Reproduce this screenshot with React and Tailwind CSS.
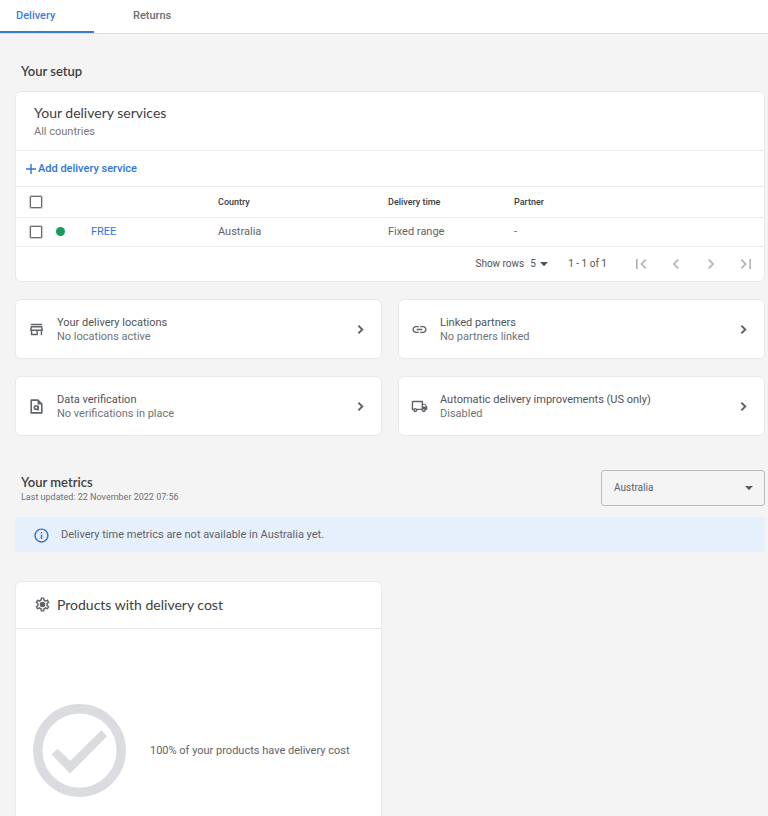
import { useState } from "react";
import {
  MdChevronLeft,
  MdFirstPage,
  MdInfoOutline,
  MdLastPage,
  MdLink,
  MdOutlineLocalShipping,
  MdOutlineSettings,
  MdOutlineStore,
  MdChevronRight,
} from "react-icons/md";

const tabs = ["Delivery", "Returns"];

const services = [
  { id: 1, name: "FREE", country: "Australia", time: "Fixed range", partner: "-" },
];

// page outline with a small lens
const VerifyIcon = ({ className }) => (
  <svg viewBox="0 0 24 24" className={className} fill="none" stroke="currentColor" strokeWidth="2.2" aria-hidden="true">
    <path d="M5 3h9l5.5 5.5V21h-15V3z" strokeLinejoin="round" />
    <path d="M13.5 2.5v6.5h6.5z" fill="currentColor" stroke="none" />
    <circle cx="11.5" cy="13.5" r="2.6" />
    <path d="M14.3 11v6.5" />
  </svg>
);

const GearIcon = ({ className }) => (
  <svg viewBox="0 0 24 24" className={className} aria-hidden="true">
    <MdOutlineSettings size={24} />
    <circle cx="12" cy="12" r="3.4" fill="currentColor" />
  </svg>
);

const PlusIcon = ({ className }) => (
  <svg viewBox="0 0 14 14" className={className} fill="none" stroke="currentColor" strokeWidth="1.4" aria-hidden="true">
    <path d="M7 2v10M2 7h10" />
  </svg>
);

const ChevronIcon = ({ className }) => (
  <svg viewBox="0 0 24 24" className={className} fill="none" stroke="currentColor" strokeWidth="2.8" aria-hidden="true">
    <path d="M9 6.5l5.5 5.5L9 17.5" />
  </svg>
);

const CaretIcon = ({ className }) => (
  <svg viewBox="0 0 16 16" className={className} fill="currentColor" aria-hidden="true">
    <path d="M4 6h8l-4 4.2z" />
  </svg>
);

const links = [
  { title: "Your delivery locations", text: "No locations active", icon: MdOutlineStore },
  { title: "Linked partners", text: "No partners linked", icon: MdLink },
  { title: "Data verification", text: "No verifications in place", icon: VerifyIcon },
  { title: "Automatic delivery improvements (US only)", text: "Disabled", icon: MdOutlineLocalShipping },
];

const App = () => {
  const [tab, setTab] = useState("Delivery");
  const [selected, setSelected] = useState([]);
  const [rows, setRows] = useState("5");
  const [country, setCountry] = useState("Australia");

  const toggle = (id) =>
    setSelected((prev) => (prev.includes(id) ? prev.filter((s) => s !== id) : [...prev, id]));

  const toggleAll = () =>
    setSelected((prev) => (prev.length === services.length ? [] : services.map((s) => s.id)));

  return (
    <div className="flex h-screen flex-col bg-[#f4f4f4] font-[Roboto,sans-serif] text-[11px] leading-4 text-[#5f6368]">
      <nav className="flex shrink-0 border-b border-[#e0e0e0] bg-white">
        {tabs.map((name) => (
          <button
            key={name}
            onClick={() => setTab(name)}
            className={`h-[33px] border-b-2 text-left font-medium ${
              tab === name
                ? "w-[94px] border-[#3b78d8] pl-4 text-[#3b7ddd]"
                : "w-[116px] border-transparent pl-[39px] text-[#6b6e72]"
            }`}
          >
            {name}
          </button>
        ))}
      </nav>

      <main className="min-h-0 flex-1 overflow-y-auto pt-[29px] pr-[3px] pb-6 pl-[15px] [scrollbar-width:none]">
        <h2 className="pl-1.5 font-[Lato,sans-serif] text-[13px] font-semibold text-[#3c4043]">Your setup</h2>

        <section className="mt-3 rounded-md border border-[#e9e9e9] bg-white">
          <div className="h-[59px] border-b border-[#ebebeb] pt-[13px] pl-[18px]">
            <h3 className="font-[Lato,sans-serif] text-[14px] text-[#3c4043]">Your delivery services</h3>
            <p className="mt-[3px] text-[#77797d]">All countries</p>
          </div>
          <div className="flex h-9 items-center border-b border-[#ebebeb] pl-2">
            <button className="flex items-center font-medium text-[#2f74dc]">
              <PlusIcon className="size-[14px]" />
              Add delivery service
            </button>
          </div>

          <table className="w-full table-fixed text-left">
            <thead>
              <tr className="h-[30px] border-b border-[#ebebeb] text-[9px] text-[#3c4043]">
                <th className="w-[40px] pl-3.5">
                  <Check label="Select all" checked={selected.length === services.length} onChange={toggleAll} />
                </th>
                <th className="w-[35px]" />
                <th className="w-[127px]" />
                <th className="w-[170px] font-medium">Country</th>
                <th className="w-[126px] font-medium">Delivery time</th>
                <th className="font-medium">Partner</th>
              </tr>
            </thead>
            <tbody>
              {services.map((s) => (
                <tr key={s.id} className="h-[29px] border-b border-[#ebebeb]">
                  <td className="pl-3.5">
                    <Check label={`Select ${s.name}`} checked={selected.includes(s.id)} onChange={() => toggle(s.id)} />
                  </td>
                  <td>
                    <span className="block size-[9px] rounded-full bg-[#159c58]" />
                  </td>
                  <td>
                    <a href="#free" className="text-[#2f74dc]">{s.name}</a>
                  </td>
                  <td>{s.country}</td>
                  <td>{s.time}</td>
                  <td>{s.partner}</td>
                </tr>
              ))}
            </tbody>
          </table>

          <div className="flex h-[34px] items-center justify-end pr-2 text-[10px] text-[#505357]">
            <label htmlFor="rows">Show rows</label>
            <div className="relative mr-[18px] ml-1.5">
              <select
                id="rows"
                value={rows}
                onChange={(e) => setRows(e.target.value)}
                className="block w-5 appearance-none bg-transparent outline-none"
              >
                <option>5</option>
                <option>10</option>
                <option>25</option>
              </select>
              <CaretIcon className="pointer-events-none absolute top-0 left-1.5 size-4" />
            </div>
            <span>1 - 1 of 1</span>
            <div className="ml-6 flex gap-[15px] text-[#b4b4b4]">
              <PageButton label="First page" icon={MdFirstPage} />
              <PageButton label="Previous page" icon={MdChevronLeft} />
              <PageButton label="Next page" icon={MdChevronRight} />
              <PageButton label="Last page" icon={MdLastPage} />
            </div>
          </div>
        </section>

        <div className="mt-[17px] grid grid-cols-2 gap-x-4 gap-y-[17px]">
          {links.map((l) => (
            <LinkCard key={l.title} {...l} />
          ))}
        </div>

        <div className="mt-[34px] flex items-start justify-between">
          <div className="pt-1 pl-1.5">
            <h2 className="font-[Lato,sans-serif] text-[13px] font-semibold text-[#3c4043]">Your metrics</h2>
            <p className="text-[9px] leading-[14px] text-[#6f7276]">Last updated: 22 November 2022 07:56</p>
          </div>
          <div className="relative w-[164px]">
            <select
              aria-label="Country"
              value={country}
              onChange={(e) => setCountry(e.target.value)}
              className="block h-9 w-full appearance-none rounded-[3px] border border-[#bcbcbc] bg-transparent pl-3 text-[10px] outline-none"
            >
              <option>Australia</option>
              <option>New Zealand</option>
              <option>United States</option>
            </select>
            <CaretIcon className="pointer-events-none absolute top-2.5 right-2 size-4" />
          </div>
        </div>

        <div className="mt-[11px] flex h-[35px] items-center rounded-[3px] bg-[#e6effc] pt-0.5 pl-[18px]">
          <MdInfoOutline className="size-[17px] text-[#2f6fcb]" />
          <p className="ml-[11px]">Delivery time metrics are not available in Australia yet.</p>
        </div>

        <div className="mt-[29px] grid grid-cols-2 gap-4">
          <section className="rounded-md border border-[#e9e9e9] bg-white">
            <div className="flex h-[47px] items-center border-b border-[#e4e4e4] pl-[18px]">
              <GearIcon className="size-[17px]" />
              <h3 className="ml-1.5 font-[Lato,sans-serif] text-[14px] text-[#3c4043]">Products with delivery cost</h3>
            </div>
            <div className="flex h-[244px] items-center pl-[17px]">
              <CheckMark />
              <p className="ml-6">100% of your products have delivery cost</p>
            </div>
          </section>
        </div>
      </main>
    </div>
  );
};

const Check = ({ label, checked, onChange }) => (
  <input
    type="checkbox"
    aria-label={label}
    checked={checked}
    onChange={onChange}
    className="block size-3 appearance-none rounded-[1px] border border-[#6a6d70] bg-white ring-1 ring-[#6a6d70]/35 checked:bg-[#2f74dc]"
  />
);

const PageButton = ({ label, icon: Icon }) => (
  <button aria-label={label} className="flex">
    <Icon className="size-5" />
  </button>
);

const LinkCard = ({ title, text, icon: Icon }) => (
  <button className="flex h-[60px] items-center rounded-md border border-[#e9e9e9] bg-white px-3 pt-0.5 text-left">
    <Icon className="size-[17px] shrink-0" />
    <span className="ml-3 min-w-0 flex-1 leading-[14px]">
      <span className="block text-[#505357]">{title}</span>
      <span className="block text-[#6f7276]">{text}</span>
    </span>
    <ChevronIcon className="size-[17px] shrink-0" />
  </button>
);

const CheckMark = () => (
  <svg viewBox="0 0 93 93" className="size-[93px] shrink-0" fill="#dadcdf" aria-hidden="true">
    <circle cx="46.5" cy="46.5" r="41.7" fill="none" stroke="#dadcdf" strokeWidth="9.4" />
    <path d="M18.6 50.6 24.6 44.8 37.2 56.7 68.5 26.2 74 32.2 37.2 69.6z" />
  </svg>
);

export default App;
